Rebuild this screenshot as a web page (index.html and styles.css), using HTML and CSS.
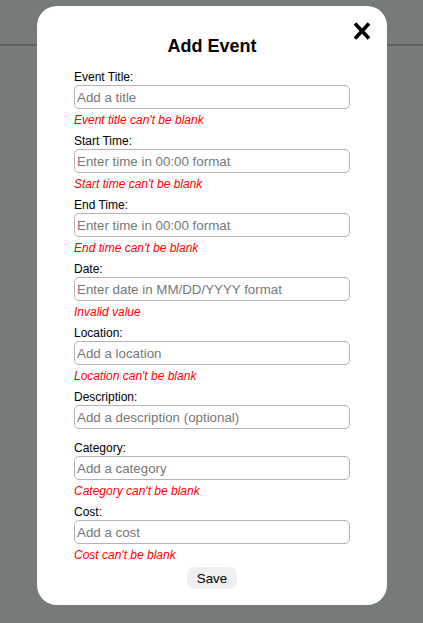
FILE: index.html
```html
<!DOCTYPE html>
<html>
<head>
<meta charset="utf-8">
<link rel="stylesheet" href="styles.css">
</head>
<body>
<div class="page-header"></div>
<div class="modal">
  <button class="close" aria-label="Close">
    <svg width="18" height="20" viewBox="0 0 18 20"><path d="M2 2.5 L16 17.5 M16 2.5 L2 17.5" stroke="#000" stroke-width="3.6" fill="none"/></svg>
  </button>
  <h2 class="title">Add Event</h2>
  <form class="form">
    <div class="field">
      <label>Event Title:</label>
      <input type="text" placeholder="Add a title">
      <span class="error">Event title can't be blank</span>
    </div>
    <div class="field">
      <label>Start Time:</label>
      <input type="text" placeholder="Enter time in 00:00 format">
      <span class="error">Start time can't be blank</span>
    </div>
    <div class="field">
      <label>End Time:</label>
      <input type="text" placeholder="Enter time in 00:00 format">
      <span class="error">End time can't be blank</span>
    </div>
    <div class="field">
      <label>Date:</label>
      <input type="text" placeholder="Enter date in MM/DD/YYYY format">
      <span class="error">Invalid value</span>
    </div>
    <div class="field">
      <label>Location:</label>
      <input type="text" placeholder="Add a location">
      <span class="error">Location can't be blank</span>
    </div>
    <div class="field field-plain">
      <label>Description:</label>
      <input type="text" placeholder="Add a description (optional)">
    </div>
    <div class="field">
      <label>Category:</label>
      <input type="text" placeholder="Add a category">
      <span class="error">Category can't be blank</span>
    </div>
    <div class="field">
      <label>Cost:</label>
      <input type="text" placeholder="Add a cost">
      <span class="error">Cost can't be blank</span>
    </div>
    <div class="actions">
      <button type="button" class="save">Save</button>
    </div>
  </form>
</div>
</body>
</html>
```

FILE: styles.css
```css
html, body {
  margin: 0;
  padding: 0;
}
body {
  background: #767b77;
  font-family: "Liberation Sans", Arial, sans-serif;
  height: 623px;
  overflow: hidden;
}
.page-header {
  height: 44px;
  border-bottom: 2px solid #5c605d;
}
.modal {
  position: fixed;
  top: 6px;
  left: 37px;
  width: 350px;
  box-sizing: border-box;
  background: #fff;
  border-radius: 20px;
  padding: 30px 37px 16px;
}
.close {
  position: absolute;
  top: 15px;
  right: 16px;
  padding: 0;
  border: 0;
  background: none;
  width: 18px;
  height: 20px;
  display: block;
}
.close svg {
  display: block;
}
.title {
  margin: 0;
  font-size: 18px;
  line-height: 21px;
  font-weight: bold;
  text-align: center;
  color: #000;
}
.form {
  display: flex;
  flex-direction: column;
  gap: 7px;
  margin-top: 13px;
}
.field {
  display: flex;
  flex-direction: column;
}
.field-plain {
  margin-bottom: 5px;
}
.field label {
  font-size: 12px;
  line-height: 14px;
  color: #000;
  margin-bottom: 1px;
}
.field input {
  box-sizing: border-box;
  height: 24px;
  width: 100%;
  border: 1px solid #b3b3b3;
  border-radius: 5px;
  padding: 0 2px;
  font-family: "Liberation Sans", Arial, sans-serif;
  font-size: 13.33px;
  background: #fff;
  outline: none;
}
.field input::placeholder {
  color: #777;
}
.error {
  font-size: 12px;
  line-height: 14px;
  font-style: italic;
  color: #f00;
  margin-top: 4px;
}
.actions {
  display: flex;
  justify-content: center;
  margin-top: -2px;
}
.save {
  height: 22px;
  padding: 0 10px;
  border: 0;
  border-radius: 8px;
  background: #efefef;
  font-family: "Liberation Sans", Arial, sans-serif;
  font-size: 13.33px;
  color: #000;
}
```
